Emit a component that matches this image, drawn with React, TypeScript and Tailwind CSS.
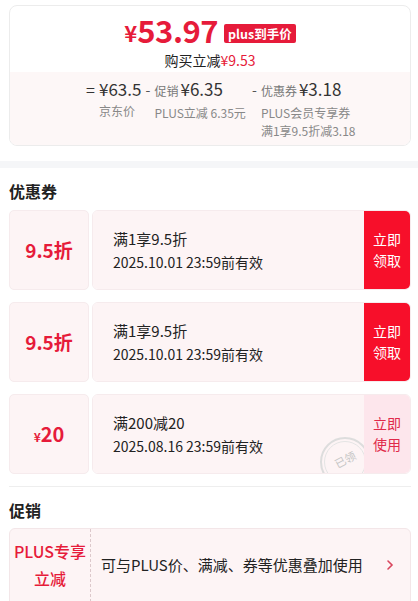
import React from "react";

const font = { fontFamily: '"Noto Sans CJK SC", "Noto Sans", sans-serif' };

function Coupon({
  left,
  title,
  date,
  used,
}: {
  left: React.ReactNode;
  title: string;
  date: string;
  used?: boolean;
}) {
  return (
    <div className="flex h-[80px] ml-[9px] mr-[7px]">
      <div className="w-[80px] shrink-0 rounded-[5px] bg-[#fdf4f5] border border-[#f6ebed] flex items-center justify-center">
        {left}
      </div>
      <div className="w-[3px] shrink-0" />
      <div className="flex-1 flex rounded-[6px] overflow-hidden border border-[#f6ebed]">
        <div className="flex-1 bg-[#fdf4f5] flex flex-col justify-center pl-[20px] relative overflow-hidden">
          <div className="text-[15px] leading-[20px] text-[#222]">{title}</div>
          <div className="text-[14px] leading-[20px] text-[#222] mt-[3px]">{date}</div>
          {used && (
            <div className="absolute right-[-6px] bottom-[-14px] w-[50px] h-[50px] rounded-full border-[2px] border-[#dddddd] flex items-center justify-center">
              <div className="w-[42px] h-[42px] rounded-full border border-[#e4e4e4] flex items-center justify-center">
                <span className="text-[11px] text-[#c4c4c4] -rotate-[28deg] mt-[-6px]">已领</span>
              </div>
            </div>
          )}
        </div>
        <div
          className={
            used
              ? "w-[46px] shrink-0 bg-[#fde6ec] flex items-center justify-center"
              : "w-[46px] shrink-0 bg-[#f70f2a] flex items-center justify-center"
          }
        >
          <div
            className={
              used
                ? "text-[14px] leading-[21px] text-[#e0294a] text-center"
                : "text-[14px] leading-[21px] text-white text-center"
            }
          >
            立即
            <br />
            {used ? "使用" : "领取"}
          </div>
        </div>
      </div>
    </div>
  );
}

export default function App() {
  return (
    <div className="w-[418px] h-[601px] overflow-hidden bg-white" style={font}>
      <div className="pt-[5px] pl-[9px] pr-[7px]">
        <div className="rounded-[8px] border border-[#ececec] overflow-hidden">
          <div className="h-[66px] flex flex-col items-center pt-[9px]">
            <div className="flex items-end h-[30px]">
              <span className="text-[#e61b3a] text-[22px] font-bold leading-[22px] mb-[2px]">¥</span>
              <span className="text-[#e61b3a] text-[31px] font-bold leading-[30px] tracking-[-0.5px]">53.97</span>
              <span className="ml-[6px] bg-[#e61b3a] text-white text-[12.5px] font-bold leading-[19px] px-[4px] rounded-[2px] mb-[2px]">
                plus到手价
              </span>
            </div>
            <div className="text-[14px] leading-[18px] mt-[6px] text-[#222]">
              购买立减<span className="text-[#e61b3a]">¥9.53</span>
            </div>
          </div>
          <div className="h-[73px] bg-[#fdf7f7] flex pl-[76px] pt-[5px]">
            <div className="flex">
              <span className="text-[16px] text-[#333] leading-[24px] w-[13px]">=</span>
              <div className="flex flex-col">
                <span className="text-[17px] text-[#333] leading-[24px]">¥63.5</span>
                <span className="text-[12px] text-[#888] leading-[18px] mt-[1px]">京东价</span>
              </div>
            </div>
            <div className="flex ml-[4px]">
              <span className="text-[14px] text-[#555] leading-[24px] w-[9px]">-</span>
              <div className="flex flex-col">
                <span className="leading-[24px]">
                  <span className="text-[12px] text-[#777]">促销</span>
                  <span className="text-[17px] text-[#333] ml-[2px]">¥6.35</span>
                </span>
                <span className="text-[12px] text-[#888] leading-[18px] mt-[1px]">PLUS立减 6.35元</span>
              </div>
            </div>
            <div className="flex ml-[6px]">
              <span className="text-[14px] text-[#555] leading-[24px] w-[9px]">-</span>
              <div className="flex flex-col">
                <span className="leading-[24px]">
                  <span className="text-[12px] text-[#777]">优惠券</span>
                  <span className="text-[17px] text-[#333] ml-[2px]">¥3.18</span>
                </span>
                <span className="text-[12px] text-[#888] leading-[18px] mt-[1px]">PLUS会员专享券</span>
                <span className="text-[12px] text-[#888] leading-[18px]">满1享9.5折减3.18</span>
              </div>
            </div>
          </div>
        </div>
      </div>

      <div className="h-[7px] bg-[#f5f6f8] mt-[15px]" />

      <div className="px-[9px] h-[42px] flex items-end pb-[9px]">
        <span className="text-[16px] font-bold text-[#222] leading-[20px]">优惠券</span>
      </div>

      <div className="flex flex-col gap-[12px]">
        <Coupon
          left={<span className="text-[#e61b3a] text-[19px] font-bold">9.5折</span>}
          title="满1享9.5折"
          date="2025.10.01 23:59前有效"
        />
        <Coupon
          left={<span className="text-[#e61b3a] text-[19px] font-bold">9.5折</span>}
          title="满1享9.5折"
          date="2025.10.01 23:59前有效"
        />
        <Coupon
          left={
            <span className="text-[#e61b3a] font-bold flex items-baseline">
              <span className="text-[12px]">¥</span>
              <span className="text-[20px]">20</span>
            </span>
          }
          title="满200减20"
          date="2025.08.16 23:59前有效"
          used
        />
      </div>

      <div className="ml-[9px] mr-[7px] mt-[12px] h-px bg-[#eeeeee]" />

      <div className="px-[9px] h-[41px] flex items-center pt-[5px]">
        <span className="text-[16px] font-bold text-[#222]">促销</span>
      </div>

      <div className="ml-[9px] mr-[7px] h-[80px] rounded-[6px] border border-[#f3e6e8] bg-[#fdf4f5] flex">
        <div className="w-[81px] shrink-0 border-r border-dashed border-[#dcc8cb] flex items-center justify-center text-center">
          <div className="text-[#e61b3a] text-[16px] font-medium leading-[27px] pb-[6px]">
            PLUS专享
            <br />
            立减
          </div>
        </div>
        <div className="flex-1 flex items-center pl-[10px] pb-[6px]">
          <span className="text-[15px] text-[#222]">可与PLUS价、满减、券等优惠叠加使用</span>
        </div>
        <div className="w-[24px] flex items-center justify-start pb-[6px]">
          <svg width="8" height="12" viewBox="0 0 8 12">
            <path d="M2 2 L6 6 L2 10" stroke="#d9455d" strokeWidth="1.6" fill="none" strokeLinecap="round" />
          </svg>
        </div>
      </div>
    </div>
  );
}
